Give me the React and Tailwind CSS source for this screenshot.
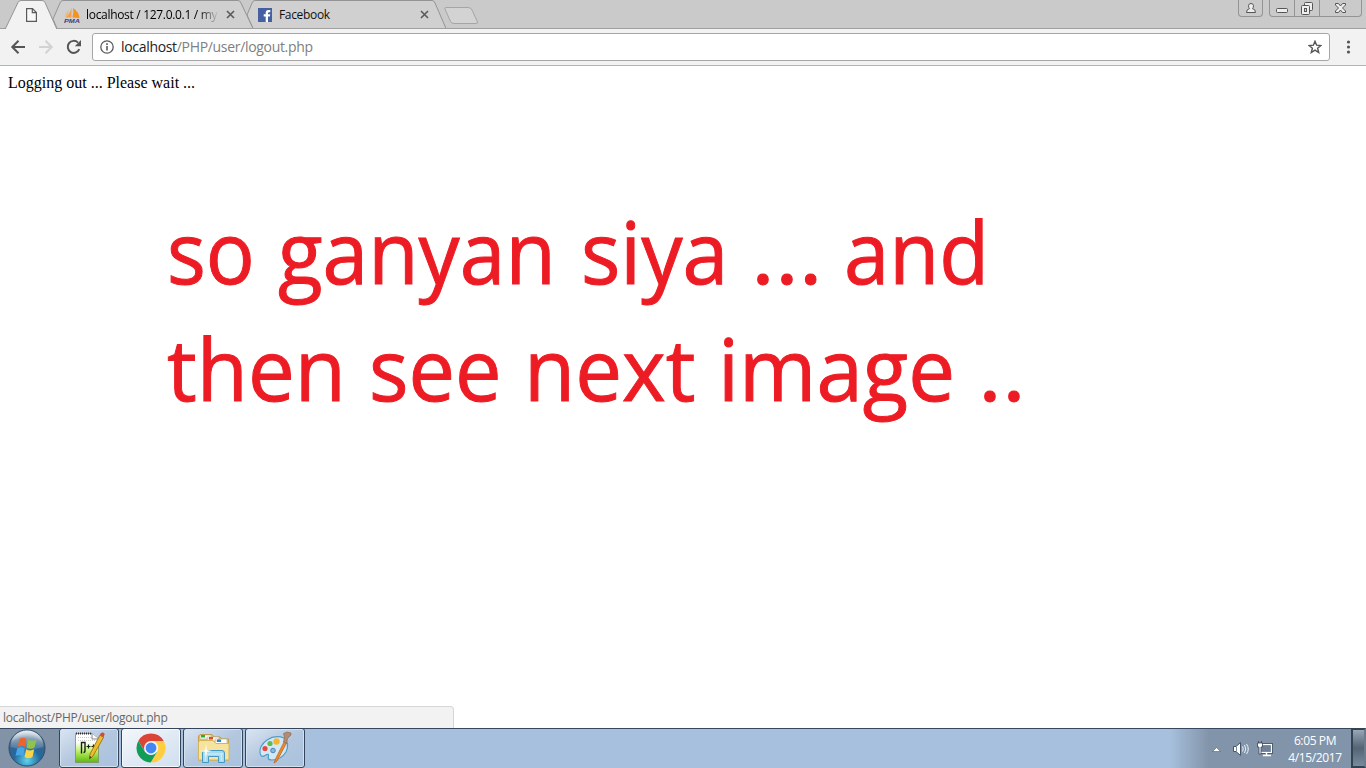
import React from "react";

function TabShapes() {
  return (
    <svg className="absolute left-0 top-0" width="1366" height="29" viewBox="0 0 1366 29" fill="none" stroke="#949494">
      <path d="M247 15 L252 3 Q253 .5 255 .5 H432 Q434 .5 435 3 L446 28.5 H253 Z" fill="#d0d0d0" />
      <path d="M53 19 L60 3 Q61 .5 63 .5 H238 Q240 .5 241 3 L253 28.5 H57 Z" fill="#d0d0d0" />
      <path d="M445.500 7.500 H468 Q471 7.500 472 10 L477.500 22 Q478 23.500 476 23.500 H454 Q451.500 23.500 450.500 21.500 L445 9 Q444.500 7.500 445.500 7.500Z" fill="#d3d3d3" stroke="#a5a5a5" />
      <path d="M0 28.500 H1366" stroke="#a0a0a0" />
      <path d="M5 29.500 L18 2.500 Q19 .5 21 .5 H42 Q44 .5 45 2.500 L57 29.500" fill="#f2f2f2" />
    </svg>
  );
}

function Close() {
  return (
    <svg width="9" height="9" viewBox="0 0 9 9" className="shrink-0">
      <path d="M1 1 L8 8 M8 1 L1 8" stroke="#5a5a5a" strokeWidth="1.600" />
    </svg>
  );
}

function TabStrip() {
  return (
    <div className="relative flex h-[29px] shrink-0 bg-[#cacaca]">
      <TabShapes />
      <div className="relative flex w-[64px] items-center pl-[26px]">
        <svg width="11" height="14" viewBox="0 0 11 14" fill="#f8f8f8" stroke="#5a5a5a" strokeWidth="1.200">
          <path d="M.6 .6 H6.500 L10.400 4.500 V13.400 H.6Z M6.300 .8 V4.700 H10.200" />
        </svg>
      </div>
      <div className="relative flex w-[193px] items-center">
        <div className="flex w-[16px] flex-col items-center">
          <svg width="16" height="16" viewBox="0 0 16 16">
            <path d="M7.500 .5 V10.500 H1.500 Q6 7 7.500 .5Z" fill="#f2a14a" />
            <path d="M9 1 Q15 5 15.500 11 L8.500 10.500 Q10 5 9 1Z" fill="#f6921e" />
            <path d="M5 3 L3 10 H1 Q2 5 5 3Z" fill="#e9b87d" />
            <text x="0" y="15.500" fontSize="6" fontFamily="Liberation Sans, sans-serif" fontWeight="bold" fontStyle="italic" fill="#3a3f7c" textLength="16" lengthAdjust="spacingAndGlyphs">PMA</text>
          </svg>
        </div>
        <span className="ml-[6px] w-[133px] overflow-hidden bg-linear-to-r from-black from-85% to-transparent bg-clip-text text-[12px] leading-[18px] tracking-[-0.31px] whitespace-nowrap text-transparent">localhost / 127.0.0.1 / my</span>
        <span className="ml-[7px]"><Close /></span>
      </div>
      <div className="relative flex w-[190px] items-center">
        <svg width="16" height="16" viewBox="0 0 16 16" className="ml-px">
          <rect y="1" width="14" height="14" fill="#4460a0" />
          <path d="M7.700 15 V9.500 H5.700 V7.300 H7.700 V5.800 Q7.700 3 10.300 3 H12.300 V5.200 H11 Q10 5.200 10 6.200 V7.300 H12.200 L11.900 9.500 H10 V15Z" fill="#fff" />
        </svg>
        <span className="ml-[5px] w-[141px] text-[12px] leading-[18px] tracking-[-0.33px] text-[#111]">Facebook</span>
        <Close />
      </div>
      <div className="relative ml-auto flex items-start pr-[4px]">
        <div className="mr-[6px] flex h-[17px] w-[25px] justify-center rounded-b-[4px] border border-t-0 border-[#949494] pt-[2px]">
          <svg width="12" height="12" viewBox="0 0 12 12" fill="#eee" stroke="#555">
            <path d="M1.500 10.500 Q1.500 7 4.500 6.700 Q3.500 5.700 3.500 3.500 Q3.800 1.500 6 1.500 Q8.200 1.500 8.500 3.500 Q8.500 5.700 7.500 6.700 Q10.500 7 10.500 10.500Z" />
          </svg>
        </div>
        <div className="flex h-[17px] overflow-hidden rounded-b-[4px] border border-t-0 border-[#949494]">
          <div className="flex w-[25px] justify-center border-r border-[#949494]">
            <svg width="14" height="16" viewBox="0 0 14 16"><rect x="1.500" y="8.500" width="11" height="4" rx="1" fill="#eee" stroke="#555" /></svg>
          </div>
          <div className="flex w-[25px] justify-center border-r border-[#949494]">
            <svg width="14" height="16" viewBox="0 0 14 16" fill="#eee" stroke="#555">
              <rect x="4.500" y="2.500" width="8" height="8" rx="1" />
              <rect x="1.500" y="5.500" width="8" height="9" rx="1" />
              <rect x="4.500" y="8.500" width="2" height="3" fill="#ddd" />
            </svg>
          </div>
          <div className="flex w-[41px] justify-center">
            <svg width="14" height="16" viewBox="0 0 14 16">
              <path d="M1.500 3.500 H4.500 L6.500 6 L8.500 3.500 H11.500 V5 L8.500 8 L11.500 11 V12.500 H8.500 L6.500 10 L4.500 12.500 H1.500 V11 L4.500 8 L1.500 5Z" fill="#eee" stroke="#555" />
            </svg>
          </div>
        </div>
      </div>
    </div>
  );
}

function Toolbar() {
  return (
    <div className="flex h-[37px] shrink-0 items-center border-b border-[#b3b3b3] bg-[#f2f2f2]">
      <div className="flex w-[92px] items-center gap-[12px] pl-[10px]">
        <svg width="16" height="16" viewBox="0 0 16 16" fill="none" stroke="#555" strokeWidth="2"><path d="M15 8 H2.500 M8.500 1.800 L2.300 8 L8.500 14.200" /></svg>
        <svg width="16" height="16" viewBox="0 0 16 16" fill="none" stroke="#d2d2d2" strokeWidth="2"><path d="M1 8 H13.500 M7.500 1.800 L13.700 8 L7.500 14.200" /></svg>
        <svg width="16" height="16" viewBox="0 0 16 16" fill="none"><path d="M13.300 10.200 A6 6 0 1 1 12 3.600" stroke="#555" strokeWidth="2" /><path d="M15 1 V7.200 H8.800Z" fill="#555" /></svg>
      </div>
      <div className="flex h-[28px] w-[1238px] items-center rounded-[3px] border border-[#a6a6a6] bg-white px-[7px]">
        <svg width="14" height="14" viewBox="0 0 14 14" fill="none" stroke="#5a5a5a"><circle cx="7" cy="7" r="6.200" strokeWidth="1.300" /><path d="M7 6 V10.500 M7 3.300 V4.900" strokeWidth="1.600" /></svg>
        <span className="ml-[7px] text-[14px] leading-[20px] tracking-[-0.32px] text-[#808080]"><span className="text-[#222]">localhost</span>/PHP/user/logout.php</span>
        <svg className="ml-auto" width="14" height="14" viewBox="0 0 14 14" fill="none" stroke="#555" strokeWidth="1.400"><path d="M7 1.300 L8.600 5.200 L12.900 5.500 L9.600 8.200 L10.700 12.500 L7 10.100 L3.300 12.500 L4.400 8.200 L1.100 5.500 L5.400 5.200Z" /></svg>
      </div>
      <svg className="ml-[16px]" width="5" height="14" viewBox="0 0 5 14" fill="#555"><circle cx="2.500" cy="2" r="1.600" /><circle cx="2.500" cy="7" r="1.600" /><circle cx="2.500" cy="12" r="1.600" /></svg>
    </div>
  );
}

function Word({ w, s, children }) {
  return (
    <span className="block shrink-0 whitespace-nowrap" style={{ width: w }}>
      <span className="inline-block origin-left" style={{ transform: `scaleX(${s})` }}>{children}</span>
    </span>
  );
}

function TaskButton({ active, children }) {
  return (
    <div className={active
      ? "flex h-[40px] w-[60px] items-center justify-center rounded-[3px] border border-[#34445a] bg-linear-to-br from-[#f4f7fb] to-[#cfdeee] shadow-[inset_0_0_0_1px_#f5f9fd]"
      : "flex h-[40px] w-[60px] items-center justify-center rounded-[3px] border border-[#34445a] bg-linear-to-br from-[#dbe5f2] via-[#b3c7df] to-[#a9c2de] shadow-[inset_0_0_0_1px_#d3e0ee]"}>
      {children}
    </div>
  );
}

function StartOrb() {
  return (
    <svg width="38" height="38" viewBox="0 0 38 38">
      <defs>
        <radialGradient id="orb" cx=".5" cy=".85" r=".8"><stop offset="0" stopColor="#5fd3ee" /><stop offset=".45" stopColor="#24699f" /><stop offset=".8" stopColor="#3b6288" /><stop offset="1" stopColor="#b2c8d8" /></radialGradient>
        <linearGradient id="shine" x2="0" y2="1"><stop stopColor="#fff" stopOpacity=".65" /><stop offset="1" stopColor="#fff" stopOpacity=".1" /></linearGradient>
      </defs>
      <circle cx="19" cy="19" r="18" fill="url(#orb)" stroke="#304d6a" />
      <path d="M2.500 18 A16.500 16.500 0 0 1 35.500 18 Q19 23 2.500 18Z" fill="url(#shine)" />
      <path d="M11.500 10 Q15 7.500 18.500 10 L17 18 Q13.500 15.500 9.500 18Z" fill="#ed642c" />
      <path d="M20 10.700 Q24 13 28.500 10.500 L26.500 18.500 Q22.500 21 18.500 18.500Z" fill="#8fc34a" />
      <path d="M9.200 19.500 Q13 17 16.800 19.500 L15 27.500 Q11.500 25 7.500 27Z" fill="#48a5e6" />
      <path d="M18.200 20.200 Q22 22.500 26.200 20.300 L24.500 28 Q20.500 30.500 16.500 28Z" fill="#fcd344" />
    </svg>
  );
}

function NotepadIcon() {
  return (
    <svg width="32" height="34" viewBox="0 0 32 34">
      <defs><linearGradient id="np" x2="0" y2="1"><stop offset=".3" stopColor="#fff" /><stop offset=".6" stopColor="#bff06b" /><stop offset="1" stopColor="#5cb80a" /></linearGradient></defs>
      <path d="M2.500 2.500 H19 L25.500 8 V31.500 H2.500Z" fill="url(#np)" stroke="#7c8f68" strokeWidth=".8" />
      <path d="M19 2.500 V8 H25.500" fill="#fff" stroke="#667" strokeWidth=".8" />
      <path d="M3 2.500 H19" stroke="#333" strokeWidth="2" strokeDasharray="1 1" />
      <path d="M5 6.500 H18 M5 9.500 H23" stroke="#ccc" strokeDasharray="1 1" />
      <path d="M8.500 22.500 V11.500 H12 V19.500 Q12 21.500 10.500 21.500" fill="none" stroke="#172111" strokeWidth="1.400" />
      <path d="M13.500 15.500 H17.500 M15.500 13.500 V17.500 M18.500 15.500 H22.500 M20.500 13.500 V17.500" stroke="#172111" strokeWidth="1.200" />
      <path d="M27 4 L30.500 6.500 L20 25 L16.500 28 L17 23Z" fill="#f2ba28" stroke="#8a6a18" strokeWidth=".8" />
      <path d="M27.500 2.500 Q30 .5 31.700 3 L30.500 6.500 L27 4Z" fill="#cb4d3c" />
      <path d="M16.500 28 L16.800 25 L18.600 26.200Z" fill="#333" />
    </svg>
  );
}

function ChromeIcon() {
  return (
    <svg width="30" height="30" viewBox="0 0 30 30">
      <path d="M2.300 7.900 A14.600 14.600 0 0 1 27.700 7.900 H15 L9 18.500Z" fill="#db4437" />
      <path d="M27.700 7.900 A14.600 14.600 0 0 1 14.700 29.600 L21.200 18.600 A7 7 0 0 0 15 7.900Z" fill="#ffcd40" />
      <path d="M2.300 7.900 A14.600 14.600 0 0 0 14.700 29.600 L21.200 18.600 Q15 24.500 8.900 18.600Z" fill="#109d58" />
      <circle cx="15" cy="15" r="7" fill="#f3f3f3" /><circle cx="15" cy="15" r="5.400" fill="#4285f4" />
    </svg>
  );
}

function FolderIcon() {
  return (
    <svg width="34" height="32" viewBox="0 0 34 32">
      <path d="M2.500 28 V4 L4 2.500 H16 L18 5 H24 L26 7 H32.500 V28Z" fill="#eccb68" stroke="#c39e43" />
      <path d="M4 3 H15 V7 H4Z M11 5 H23 V9 H11Z M19 7 H31 V12 H19Z" fill="#fff" stroke="#b6a66e" strokeWidth=".6" />
      <rect x="5" y="3" width="4" height="2.500" fill="#29af36" /><rect x="13" y="5" width="4" height="2.500" fill="#df4932" /><rect x="21" y="7.500" width="4" height="2.500" fill="#2784cf" />
      <path d="M2.500 10.500 L3.500 8.500 H17 L20 11.500 H33 V28 H2.500Z" fill="#f7e3a0" stroke="#d5b55b" />
      <path d="M6.500 30.500 V21 Q6.500 18.500 9 18.500 H26 Q28.500 18.500 28.500 21 V30.500 H22.500 V24.500 H12.500 V30.500Z" fill="#a4d9ee" stroke="#4799c1" />
      <path d="M8 22 H27 M9.500 21 V29 M25.500 21 V29" stroke="#c4ecf9" strokeWidth="1.500" />
      <path d="M10 12 L11 18 L16 19 L11 20 L10 26 L9 20 L4 19 L9 18Z" fill="#fffce7" />
    </svg>
  );
}

function PaintIcon() {
  return (
    <svg width="34" height="34" viewBox="0 0 34 34">
      <path d="M2 22 Q1 15 9 9 Q17 3.500 26 7 Q32 12 28 21 Q23 29 14 29 Q9 29 10.500 25 Q11 22 7 24.500 Q3 27 2 22Z" fill="#d2e8f4" stroke="#4f9bc8" strokeWidth="1.200" />
      <circle cx="18.500" cy="10.500" r="3.200" fill="#f6b531" /><circle cx="12" cy="12.500" r="2.600" fill="#5dbb50" /><circle cx="7" cy="17.500" r="2.600" fill="#e64840" /><circle cx="15" cy="19.500" r="2.300" fill="#8bb8d8" stroke="#4b86b1" />
      <path d="M26 11 L28.500 12 L19 30 L16 32 L17.500 28Z" fill="#f08b2b" stroke="#b35d20" strokeWidth=".7" />
      <path d="M25.500 11 L28.500 12.500 L29.500 7.500 L33 4 L33 2 L29 1 L25.500 2.500 L26.500 6Z" fill="#b38c70" stroke="#8c6b54" strokeWidth=".7" />
    </svg>
  );
}

function Taskbar() {
  return (
    <div className="flex h-[40px] shrink-0 items-center overflow-hidden bg-linear-to-r from-[#8293a8] from-0% via-[#a7c0dd] via-5% to-[#a7c0dd] shadow-[inset_0_1px_0_#35485f]">
      <div className="flex h-full w-[59px] shrink-0 items-center bg-[#8293a8] pl-[8px] shadow-[inset_0_1px_0_#35485f]"><StartOrb /></div>
      <div className="flex gap-[2px]">
        <TaskButton><NotepadIcon /></TaskButton>
        <TaskButton active><ChromeIcon /></TaskButton>
        <TaskButton><FolderIcon /></TaskButton>
        <TaskButton><PaintIcon /></TaskButton>
      </div>
      <div className="ml-auto flex h-full w-[196px] items-center bg-linear-to-r from-[#a7c0dd] to-[#8294a9] to-20% pl-[42px] shadow-[inset_0_1px_0_#35485f]">
        <svg className="mt-[2px]" width="9" height="5" viewBox="0 0 9 5"><path d="M.5 4.500 L4.500 .5 L8.500 4.500Z" fill="#fff" stroke="#3c4c5f" strokeWidth=".5" /></svg>
        <svg className="mt-[2px] ml-[11px]" width="18" height="16" viewBox="0 0 18 16" fill="none">
          <path d="M1.500 5.500 H4 L8.500 1.500 V14.500 L4 10.500 H1.500Z" fill="#fff" stroke="#41556b" /><path d="M4.500 6 V10" stroke="#7b8795" />
          <path d="M10.500 5.500 Q12 8 10.500 10.500 M12.500 4 Q15 8 12.500 12 M14.500 3 Q18 8 14.500 13" stroke="#eef4fa" />
        </svg>
        <svg className="mt-[1px] ml-[6px]" width="18" height="17" viewBox="0 0 18 17">
          <rect x="4.500" y="4.500" width="11" height="8" fill="#708197" stroke="#2d3b4b" strokeWidth="2.600" />
          <rect x="4.500" y="4.500" width="11" height="8" fill="#708197" stroke="#fff" strokeWidth="1.200" />
          <path d="M7 15.500 H15 M10.500 13 V15" stroke="#fff" strokeWidth="1.500" />
          <path d="M1.500 3 H6.500 V7 H5 V14 H3 V7 H1.500Z M2.500 1 V3 M5.500 1 V3" fill="#fff" stroke="#344252" strokeWidth=".8" />
        </svg>
        <div className="mt-[2px] ml-[11px] w-[60px] text-center text-[12px] leading-[17px] tracking-[-0.38px] text-white"><div>6:05 PM</div><div>4/15/2017</div></div>
        <div className="ml-auto h-full w-[15px] border-2 border-[#35424f] border-r-[#6d7c8d] bg-linear-to-b from-[#99a7b6] via-[#536475] to-[#798b9f]" />
      </div>
    </div>
  );
}

export default function App() {
  return (
    <div className="flex h-[768px] w-[1366px] flex-col overflow-hidden bg-white font-['Open_Sans',sans-serif]">
      <TabStrip />
      <Toolbar />
      <main className="flex flex-1 flex-col">
        <p className="pt-[8px] pl-[8px] font-['Liberation_Serif',serif] text-[16px] leading-[18px] text-black">Logging out ... Please wait ...</p>
        <div className="mt-[100px] pl-[166.500px] text-[86px] leading-[117px] text-[#ed1c24] [-webkit-text-stroke:1px_#ed1c24]">
          <div className="flex">
            <Word w={111} s={0.947}>so</Word><Word w={303} s={0.955}>ganyan</Word><Word w={170} s={0.96}>siya</Word><Word w={93.500} s={1.058}>...</Word><Word w={147} s={0.948}>and</Word>
          </div>
          <div className="flex">
            <Word w={202} s={0.97}>then</Word><Word w={155} s={0.964}>see</Word><Word w={194} s={0.97}>next</Word><Word w={260} s={0.971}>image</Word><Word w={48} s={1.058}>..</Word>
          </div>
        </div>
        <div className="mt-auto h-[22px] w-[454px] rounded-tr-[4px] border-t border-r border-[#d6d6d6] bg-[#f2f2f2] pl-[3px] text-[12px] leading-[22px] tracking-[-0.27px] text-[#666]">localhost/PHP/user/logout.php</div>
      </main>
      <Taskbar />
    </div>
  );
}
